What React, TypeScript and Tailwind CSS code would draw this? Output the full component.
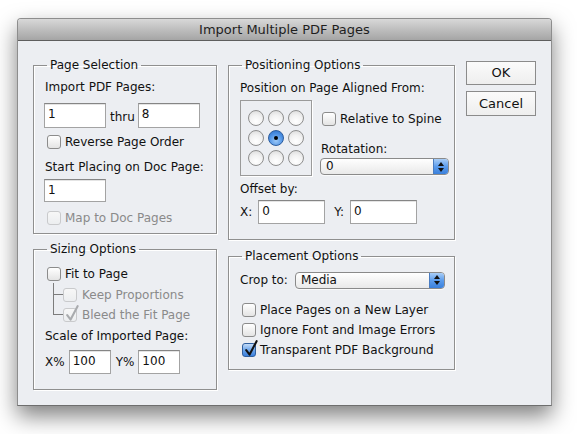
import React from "react";

type CbProps = { checked?: boolean; disabled?: boolean };

const Check: React.FC<CbProps> = ({ checked, disabled }) => {
  const box = disabled
    ? "border-[#c9cacc] bg-gradient-to-b from-[#f7f7f7] to-[#eceef0]"
    : checked
    ? "border-[#2f5f9e] bg-gradient-to-b from-[#c4dcf8] via-[#6ea6ea] to-[#3a7fdc]"
    : "border-[#8c8c8c] bg-gradient-to-b from-white to-[#e4e4e4]";
  return (
    <span className={`relative inline-block h-[14px] w-[14px] shrink-0 rounded-[3px] border ${box}`}>
      {checked && (
        <svg
          className="absolute left-[1px] top-[-4px] h-[17px] w-[14px]"
          viewBox="0 0 14 17"
        >
          <path
            d="M2.2 10.2 L5.6 14.6 L12.6 1.2"
            fill="none"
            stroke={disabled ? "#a9abae" : "#111"}
            strokeWidth={2.1}
            strokeLinecap="round"
            strokeLinejoin="round"
          />
        </svg>
      )}
    </span>
  );
};

const CheckRow: React.FC<CbProps & { label: string; className?: string }> = ({
  label,
  checked,
  disabled,
  className = "",
}) => (
  <div className={`flex h-[16px] items-center gap-[4px] ${className}`}>
    <Check checked={checked} disabled={disabled} />
    <span className={disabled ? "text-[#8a8a8a]" : "text-[#111]"}>{label}</span>
  </div>
);

const Field: React.FC<{ w: string; h: string; value: string }> = ({ w, h, value }) => (
  <div
    className={`${w} ${h} shrink-0 border border-[#a3a3a3] border-t-[#858585] bg-white pl-[3px] pt-[2px] leading-[16px] text-[#111] shadow-[inset_0_1px_0_#e4e4e4]`}
  >
    {value}
  </div>
);

const Radio: React.FC<{ on?: boolean }> = ({ on }) =>
  on ? (
    <span className="flex h-[16px] w-[16px] items-center justify-center rounded-full border border-[#2c5c9c] bg-[radial-gradient(circle_at_50%_70%,#9cc8f6_0%,#4f93e6_55%,#2a6cc8_100%)]">
      <span className="h-[4px] w-[4px] rounded-full bg-black" />
    </span>
  ) : (
    <span className="h-[16px] w-[16px] rounded-full border border-[#8e8e8e] bg-[radial-gradient(circle_at_50%_75%,#ffffff_0%,#f2f2f2_50%,#d6d6d6_100%)]" />
  );

const Select: React.FC<{ w: string; value: string }> = ({ w, value }) => (
  <div
    className={`${w} flex h-[17px] shrink-0 items-stretch overflow-hidden rounded-[4px] border border-[#8a8a8a] bg-gradient-to-b from-white to-[#e9e9e9] shadow-[0_1px_0_rgba(255,255,255,0.7)]`}
  >
    <div className="flex-1 pl-[5px] leading-[15px] text-[#111]">{value}</div>
    <div className="flex w-[15px] flex-col items-center justify-center gap-[2px] border-l border-[#4a7cc0] bg-gradient-to-b from-[#a9cdf6] via-[#5b9cec] to-[#3a80dc]">
      <svg width="6" height="4" viewBox="0 0 6 4">
        <path d="M0 4 L3 0 L6 4 Z" fill="#111" />
      </svg>
      <svg width="6" height="4" viewBox="0 0 6 4">
        <path d="M0 0 L3 4 L6 0 Z" fill="#111" />
      </svg>
    </div>
  </div>
);

const Group: React.FC<{ title: string; className: string; children: React.ReactNode }> = ({
  title,
  className,
  children,
}) => (
  <fieldset
    className={`${className} m-0 border border-[#8f8f8f] p-0 shadow-[1px_1px_0_#ffffff,inset_1px_1px_0_#ffffff]`}
  >
    <legend className="ml-[13px] px-[3px] leading-[16px] text-[#111]">{title}</legend>
    {children}
  </fieldset>
);

const Button: React.FC<{ label: string; h: string }> = ({ label, h }) => (
  <div
    className={`${h} flex w-[70px] items-center justify-center border border-[#8b8b8b] bg-gradient-to-b from-[#fbfbfb] to-[#eeeeee] text-[13px] text-[#111]`}
  >
    {label}
  </div>
);

export default function App() {
  return (
    <div className="h-[434px] w-[577px] overflow-hidden bg-white pl-[17px] pt-[18px] font-['DejaVu_Sans',sans-serif] text-[12px]">
      <div className="flex h-[388px] w-[535px] flex-col overflow-hidden rounded-t-[4px] border border-[#8d8d8d] border-b-[#6e6e6e] bg-[#eceef2] shadow-[0_10px_22px_rgba(0,0,0,0.5)]">
        {/* Title bar */}
        <div className="flex h-[22px] shrink-0 items-center justify-center border-b border-[#5e5e5e] bg-gradient-to-b from-[#d8d8d8] to-[#a5a5a5] text-[13px] text-[#1e1e1e]">
          Import Multiple PDF Pages
        </div>

        {/* Body */}
        <div className="flex gap-[11px] pl-[15px] pt-[16px]">
          {/* Left column */}
          <div className="flex w-[184px] flex-col gap-[7px]">
            <Group title="Page Selection" className="h-[177px]">
              <div className="flex flex-col pl-[10px]">
                <div className="mt-[6px] pl-px leading-[16px] text-[#111]">Import PDF Pages:</div>
                <div className="mt-[8px] flex items-center">
                  <Field w="w-[62px]" h="h-[25px]" value="1" />
                  <span className="ml-[4px] mr-[3px] mt-[3px] text-[#111]">thru</span>
                  <Field w="w-[62px]" h="h-[25px]" value="8" />
                </div>
                <CheckRow className="ml-[3px] mt-[6px]" label="Reverse Page Order" />
                <div className="mt-[9px] pl-px leading-[16px] text-[#111]">Start Placing on Doc Page:</div>
                <div className="mt-[4px]">
                  <Field w="w-[62px]" h="h-[23px]" value="1" />
                </div>
                <CheckRow className="ml-[3px] mt-[8px]" label="Map to Doc Pages" disabled />
              </div>
            </Group>

            <Group title="Sizing Options" className="h-[149px]">
              <div className="flex flex-col pl-[10px]">
                <CheckRow className="ml-[3px] mt-[9px]" label="Fit to Page" />
                <div className="ml-[9px] mt-px flex flex-col">
                  <div className="flex h-[24px] items-stretch">
                    <div className="flex w-[10px] flex-col">
                      <div className="h-[12px] border-b border-l border-[#7c7c7c]" />
                      <div className="h-[12px] border-l border-[#7c7c7c]" />
                    </div>
                    <div className="flex items-center">
                      <CheckRow label="Keep Proportions" disabled className="gap-[5px]" />
                    </div>
                  </div>
                  <div className="flex h-[16px] items-stretch">
                    <div className="flex w-[10px] flex-col">
                      <div className="h-[8px] border-b border-l border-[#7c7c7c]" />
                    </div>
                    <div className="flex items-center">
                      <CheckRow label="Bleed the Fit Page" disabled checked className="gap-[5px]" />
                    </div>
                  </div>
                </div>
                <div className="mt-[5px] pl-px leading-[16px] text-[#111]">Scale of Imported Page:</div>
                <div className="mt-[6px] flex items-center">
                  <span className="pl-px text-[#111]">X%</span>
                  <span className="ml-[4px]">
                    <Field w="w-[42px]" h="h-[24px]" value="100" />
                  </span>
                  <span className="ml-[5px] text-[#111]">Y%</span>
                  <span className="ml-[4px]">
                    <Field w="w-[42px]" h="h-[24px]" value="100" />
                  </span>
                </div>
              </div>
            </Group>
          </div>

          {/* Middle column */}
          <div className="flex w-[227px] flex-col gap-[8px]">
            <Group title="Positioning Options" className="h-[183px]">
              <div className="flex flex-col pl-[11px]">
                <div className="mt-[7px] leading-[16px] text-[#111]">Position on Page Aligned From:</div>
                <div className="mt-[4px] flex">
                  <div className="flex h-[76px] w-[72px] items-center justify-center border border-[#9a9a9a] shadow-[1px_1px_0_#ffffff]">
                    <div className="grid grid-cols-3 gap-[4px]">
                      <Radio />
                      <Radio />
                      <Radio />
                      <Radio />
                      <Radio on />
                      <Radio />
                      <Radio />
                      <Radio />
                      <Radio />
                    </div>
                  </div>
                  <div className="ml-[8px] flex flex-col">
                    <CheckRow className="ml-[2px] mt-[11px]" label="Relative to Spine" />
                    <div className="mt-[14px] pl-px leading-[16px] text-[#111]">Rotatation:</div>
                    <div className="mt-px">
                      <Select w="w-[129px]" value="0" />
                    </div>
                  </div>
                </div>
                <div className="mt-[5px] leading-[16px] text-[#111]">Offset by:</div>
                <div className="mt-[3px] flex items-center">
                  <span className="text-[#111]">X:</span>
                  <span className="ml-[6px]">
                    <Field w="w-[67px]" h="h-[24px]" value="0" />
                  </span>
                  <span className="ml-[9px] text-[#111]">Y:</span>
                  <span className="ml-[6px]">
                    <Field w="w-[67px]" h="h-[24px]" value="0" />
                  </span>
                </div>
              </div>
            </Group>

            <Group title="Placement Options" className="h-[122px]">
              <div className="flex flex-col pl-[11px]">
                <div className="mt-[7px] flex items-center">
                  <span className="text-[#111]">Crop to:</span>
                  <span className="ml-[7px]">
                    <Select w="w-[150px]" value="Media" />
                  </span>
                </div>
                <CheckRow className="ml-[2px] mt-[13px]" label="Place Pages on a New Layer" />
                <CheckRow className="ml-[2px] mt-[4px]" label="Ignore Font and Image Errors" />
                <CheckRow className="ml-[2px] mt-[4px]" label="Transparent PDF Background" checked />
              </div>
            </Group>
          </div>

          {/* Buttons */}
          <div className="flex flex-col gap-[6px] pt-[4px]">
            <Button label="OK" h="h-[24px]" />
            <Button label="Cancel" h="h-[25px]" />
          </div>
        </div>
      </div>
    </div>
  );
}
